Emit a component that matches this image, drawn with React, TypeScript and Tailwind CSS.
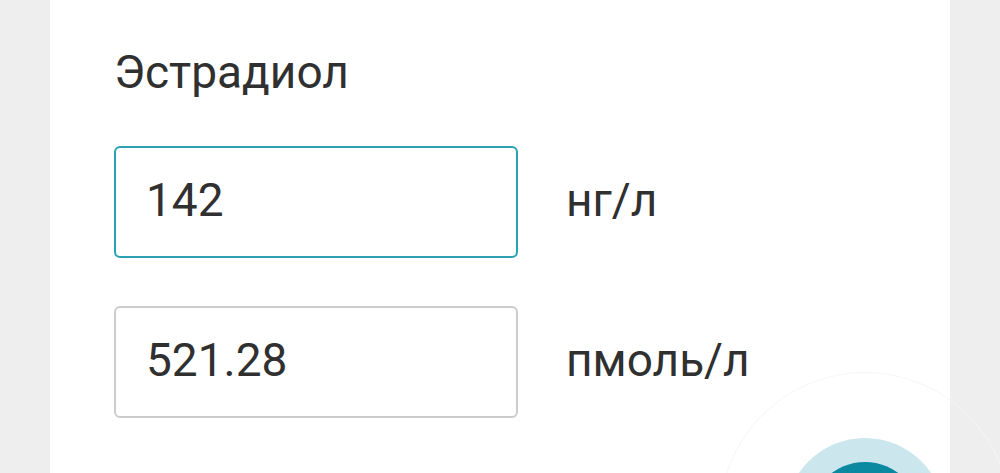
export default function App() {
  return (
    <div
      className="relative h-[473px] w-[1000px] overflow-hidden bg-[#eeeeee]"
      style={{ fontFamily: 'Roboto, "Noto Sans", sans-serif' }}
    >
      <div className="mx-[50px] h-full bg-white pl-[64px] pt-[45px] text-[#303030]">
        <div className="text-[46px] leading-[54px]">Эстрадиол</div>

        <div className="mt-[47px] flex flex-col gap-[48px]">
          <div className="flex items-center gap-[48px]">
            <div className="flex h-[112px] w-[404px] items-center rounded-[6px] border-2 border-[#2aa1b2] pb-[4px] pl-[30px] text-[46px]">
              142
            </div>
            <span className="pb-[4px] text-[46px]">нг/л</span>
          </div>
          <div className="flex items-center gap-[48px]">
            <div className="flex h-[112px] w-[404px] items-center rounded-[6px] border-2 border-[#cccccc] pb-[4px] pl-[30px] text-[46px]">
              521.28
            </div>
            <span className="pb-[4px] text-[46px]">пмоль/л</span>
          </div>
        </div>
      </div>

      {/* floating action button, mostly below the fold */}
      <div className="absolute left-[719px] top-[372px] h-[292px] w-[292px] rounded-full border border-[#f6f6f6]" />
      <div className="absolute left-[785px] top-[438px] flex h-[160px] w-[160px] items-center justify-center rounded-full bg-[#cce6ee]">
        <div className="h-[112px] w-[112px] rounded-full bg-[#0a89a0]" />
      </div>
    </div>
  )
}
